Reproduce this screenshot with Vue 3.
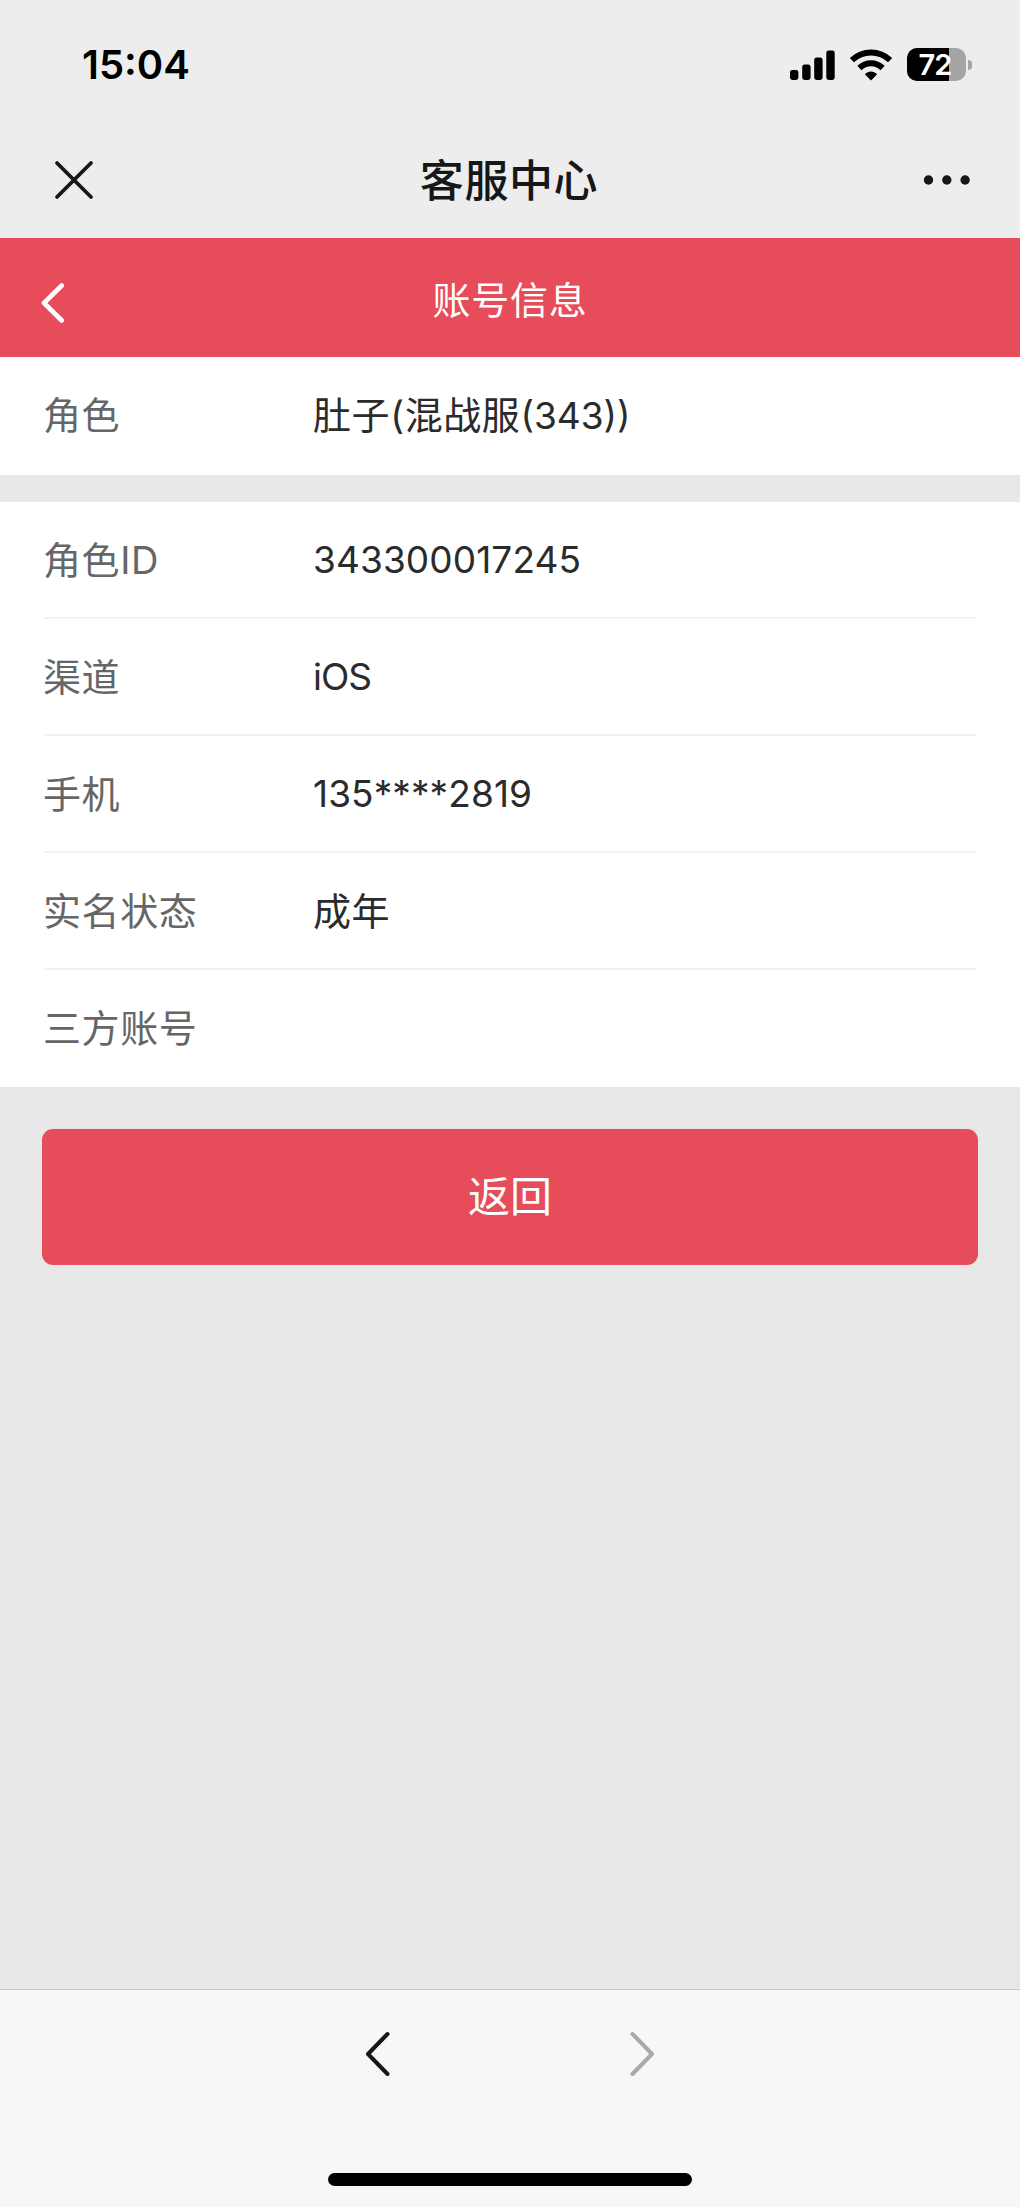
<script setup>
import { ref } from "vue";

const battery = ref(72);

const role = ref({ label: "角色", name: "肚子", area: "混战服", server: "343" });

const rows = ref([
  { key: "id", label: "角色ID", value: "343300017245" },
  { key: "channel", label: "渠道", value: "iOS" },
  { key: "phone", label: "手机", value: "135****2819" },
  { key: "realname", label: "实名状态", value: "成年" },
  { key: "third", label: "三方账号", value: "" },
]);

const goBack = () => {
  window.history.back();
};
</script>

<template>
  <div class="page">
    <div class="status">
      <div class="time">15:04</div>
      <div class="status-icons">
        <svg class="signal" width="45" height="30" viewBox="0 0 45 30">
          <rect x="0" y="20" width="8.4" height="10" rx="2.4" />
          <rect x="12.2" y="14.5" width="8.4" height="15.5" rx="2.4" />
          <rect x="24.2" y="7.5" width="8.4" height="22.5" rx="2.4" />
          <rect x="36.3" y="0.4" width="8.4" height="29.6" rx="2.4" />
        </svg>
        <svg class="wifi" width="44" height="32" viewBox="0 0 44 32">
          <path class="arc" d="M2.9 11.2 A27.5 27.5 0 0 1 41.1 11.2" />
          <path class="arc" d="M10.4 19 A16.6 16.6 0 0 1 33.6 19" />
          <path d="M22 31.6 L16.3 25.8 Q15.7 25 16.6 24.4 Q22 20.6 27.4 24.4 Q28.3 25 27.7 25.8 Z" />
        </svg>
        <div class="battery">
          <div class="battery-fill" :style="{ width: battery + '%' }"></div>
          <span class="battery-text">{{ battery }}</span>
        </div>
        <div class="battery-cap"></div>
      </div>
    </div>

    <div class="nav">
      <svg class="close" width="40" height="40" viewBox="0 0 40 40">
        <path d="M3 3 L37 37 M37 3 L3 37" />
      </svg>
      <div class="nav-title">客服中心</div>
      <svg class="more" width="48" height="12" viewBox="0 0 48 12">
        <circle cx="5.5" cy="6" r="4.7" />
        <circle cx="23.8" cy="6" r="4.7" />
        <circle cx="42.1" cy="6" r="4.7" />
      </svg>
    </div>

    <div class="head">
      <svg class="head-back" width="24" height="42" viewBox="0 0 24 42" @click="goBack">
        <path d="M20.8 3.5 L3 21 L20.8 38.5" />
      </svg>
      <div class="head-title">账号信息</div>
    </div>

    <div class="card card-role">
      <div class="row">
        <div class="label">{{ role.label }}</div>
        <div class="value">{{ role.name }}({{ role.area }}<span class="server">({{ role.server }}))</span></div>
      </div>
    </div>

    <div class="card">
      <div v-for="row in rows" :key="row.key" class="row">
        <div class="label">{{ row.label }}</div>
        <div class="value" :class="'value-' + row.key">{{ row.value }}</div>
      </div>
    </div>

    <button type="button" class="btn" @click="goBack">返回</button>

    <div class="toolbar">
      <div class="toolbar-icons">
        <svg class="arrow" width="26" height="46" viewBox="0 0 26 46">
          <path d="M22.5 3 L3 23 L22.5 43" />
        </svg>
        <svg class="arrow arrow-off" width="26" height="46" viewBox="0 0 26 46">
          <path d="M3.5 3 L23 23 L3.5 43" />
        </svg>
      </div>
      <div class="home-bar"></div>
    </div>
  </div>
</template>

<style>
body {
  margin: 0;
  background: #e8e8e8;
}
</style>

<style scoped>
.page {
  width: 1020px;
  height: 2207px;
  display: flex;
  flex-direction: column;
  overflow: hidden;
  background: #e8e8e8;
  font-family: Inter, "Noto Sans CJK SC", sans-serif;
}

/* status bar */
.status {
  height: 130px;
  box-sizing: border-box;
  padding: 0 48px 0 82px;
  display: flex;
  align-items: center;
  justify-content: space-between;
  background: #ededed;
}
.time {
  font-size: 40px;
  font-weight: 600;
  line-height: 48px;
  color: #000;
}
.status-icons { display: flex; align-items: center; padding-bottom: 1px; }
.wifi { margin-left: 14px; }
.arc { fill: none; stroke: #000; stroke-width: 6; }
.battery {
  position: relative;
  width: 59px;
  height: 33px;
  margin-left: 14px;
  border-radius: 10px;
  background: #a5a5a5;
  overflow: hidden;
}
.battery-fill { height: 100%; background: #000; }
.battery-text {
  position: absolute;
  inset: 0;
  padding-right: 3px;
  text-align: center;
  font-size: 29px;
  font-weight: 600;
  line-height: 33px;
  letter-spacing: -1px;
  color: #fff;
}
.battery-cap {
  width: 4px;
  height: 10px;
  margin-left: 2px;
  border-radius: 0 4px 4px 0;
  background: #a5a5a5;
}

/* web view title bar */
.nav {
  height: 108px;
  box-sizing: border-box;
  padding: 0 49px 8px 54px;
  display: grid;
  grid-template-columns: 48px 1fr 53px;
  align-items: center;
  background: #ededed;
}
.close path { stroke: #171717; stroke-width: 3.8; stroke-linecap: round; }
.nav-title {
  padding: 2px 2px 0 0;
  text-align: center;
  font-size: 44px;
  font-weight: 500;
  line-height: 60px;
  letter-spacing: 0.6px;
  color: #171717;
}
.more { justify-self: end; fill: #171717; }

.head {
  height: 119px;
  box-sizing: border-box;
  padding: 4px 41px 0;
  display: grid;
  grid-template-columns: 40px 1fr 40px;
  align-items: center;
  background: #e64c5a;
}
.head-back { padding-top: 6px; }
.head-back path {
  fill: none;
  stroke: #fff;
  stroke-width: 4.6;
  stroke-linecap: round;
  stroke-linejoin: round;
}
.head-title {
  text-align: center;
  font-size: 38px;
  line-height: 56px;
  letter-spacing: 0.8px;
  color: #fff;
}

.card { padding: 0 44px; background: #fff; }
.card-role { margin-bottom: 27px; }
.row {
  height: 117px;
  box-sizing: border-box;
  display: flex;
  align-items: center;
  border-bottom: 2px solid #f2f2f2;
  font-size: 38px;
  line-height: 56px;
}
.row:last-child { border-bottom-color: #fff; }
.card-role .row { height: 118px; }
.label { width: 270px; margin-left: -1px; letter-spacing: 0.6px; color: #666; }
.value { letter-spacing: 0.6px; color: #2b2b2b; }
.server { font-size: 37px; letter-spacing: 0; }
.value-id,
.value-phone { font-size: 37px; letter-spacing: 0.1px; }
.value-channel { font-size: 37px; letter-spacing: -1px; }

.btn {
  height: 136px;
  margin: 42px 42px 0;
  padding: 0;
  border: none;
  border-radius: 11px;
  background: #e64c5a;
  color: #fff;
  font-family: inherit;
  font-size: 42px;
  line-height: 60px;
}

/* browser toolbar */
.toolbar {
  height: 218px;
  margin-top: auto;
  box-sizing: border-box;
  padding-bottom: 21px;
  border-top: 1px solid #c9c9c9;
  display: flex;
  flex-direction: column;
  align-items: center;
  justify-content: space-between;
  background: #f7f7f7;
}
.toolbar-icons { display: flex; gap: 238px; padding-top: 41px; }
.arrow path {
  fill: none;
  stroke: #171717;
  stroke-width: 4;
  stroke-linecap: round;
  stroke-linejoin: round;
}
.arrow-off path { stroke: #a9a9a9; }
.home-bar {
  width: 364px;
  height: 13px;
  border-radius: 7px;
  background: #000;
}
</style>
